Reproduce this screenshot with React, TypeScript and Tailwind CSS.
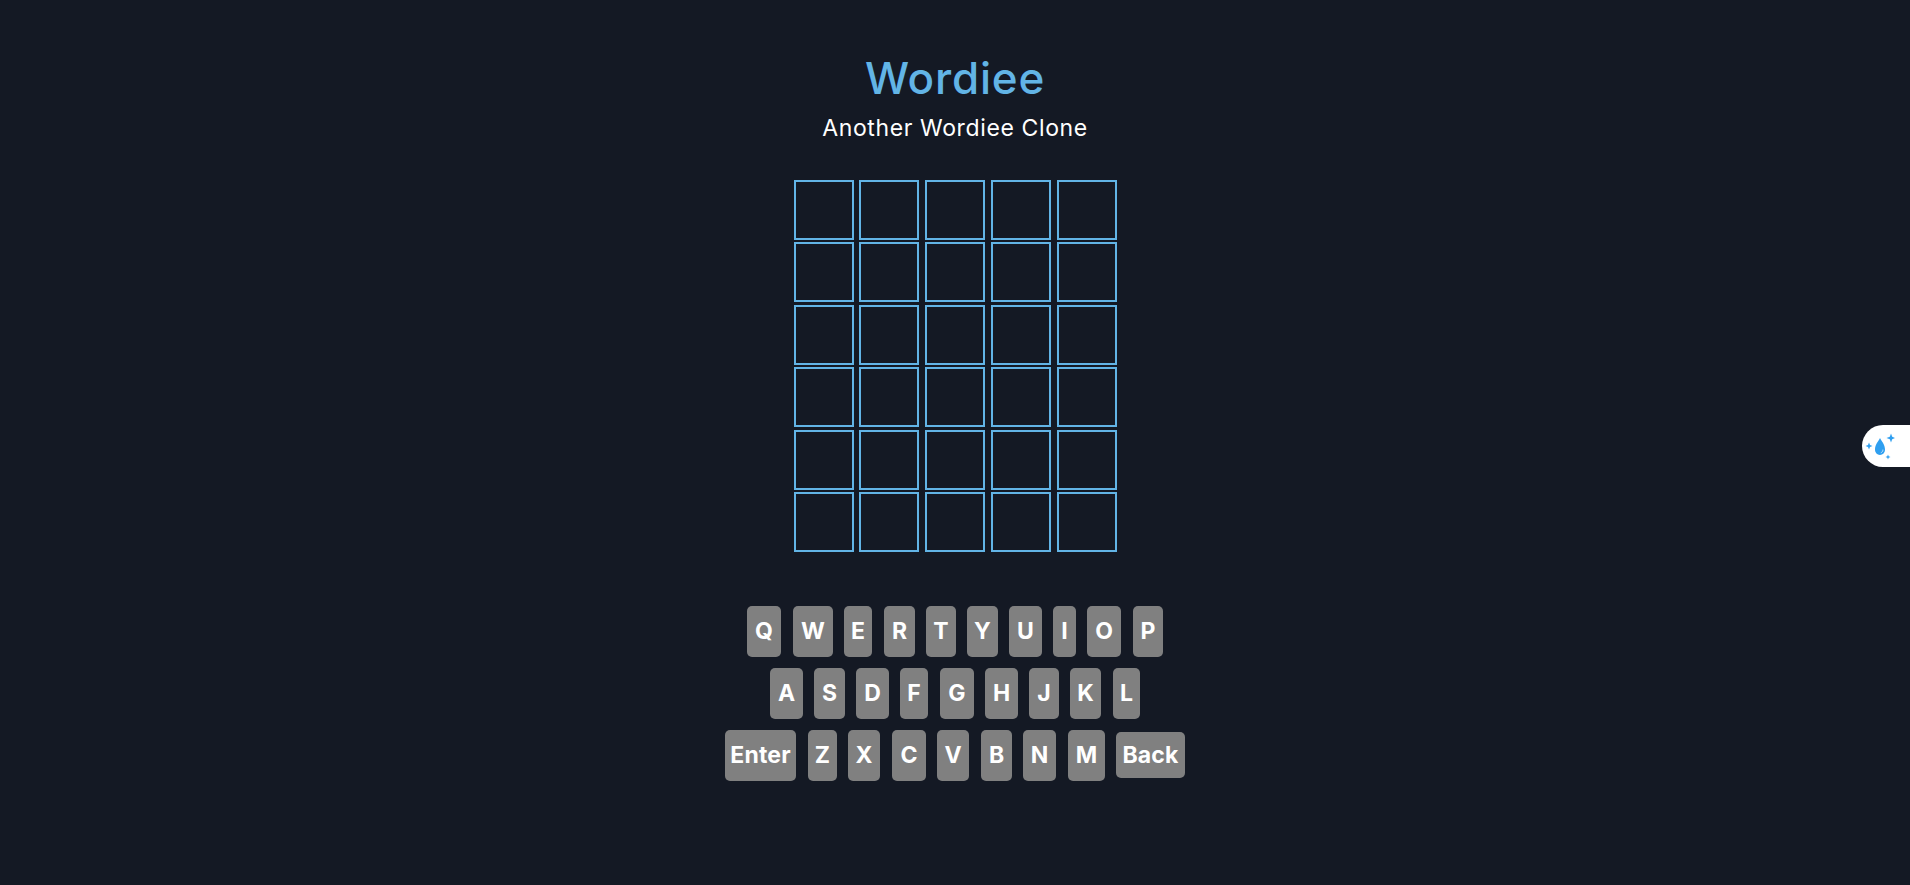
const FONT = "font-['Inter','Noto_Sans',sans-serif]";

const rows: [string, number, string][][] = [
  [["Q", 34, ""], ["W", 40, "ml-[12px]"], ["E", 28, "ml-[11px]"], ["R", 31, "ml-[12px]"], ["T", 30, "ml-[11px]"], ["Y", 31, "ml-[11px]"], ["U", 33, "ml-[11px]"], ["I", 23, "ml-[11px]"], ["O", 34, "ml-[11px]"], ["P", 30, "ml-[12px]"]],
  [["A", 33, ""], ["S", 31, "ml-[11px]"], ["D", 33, "ml-[11px]"], ["F", 28, "ml-[11px]"], ["G", 34, "ml-[12px]"], ["H", 33, "ml-[11px]"], ["J", 30, "ml-[11px]"], ["K", 31, "ml-[11px]"], ["L", 27, "ml-[12px]"]],
  [["Enter", 71, ""], ["Z", 29, "ml-[12px]"], ["X", 32, "ml-[11px]"], ["C", 34, "ml-[12px]"], ["V", 32, "ml-[11px]"], ["B", 31, "ml-[12px]"], ["N", 33, "ml-[11px]"], ["M", 37, "ml-[12px]"], ["Back", 69, "ml-[11px]"]],
];

function Key({ label, width, ml }: { label: string; width: number; ml: string }) {
  const isBack = label === "Back";
  return (
    <button
      style={{ width }}
      className={`${isBack ? "h-[46px]" : "h-[51px]"} ${ml} flex shrink-0 items-center justify-center rounded-[5px] bg-[#808080] text-[23px] leading-none font-bold text-white`}
    >
      <span className={label.length > 1 ? "tracking-[0.2px] whitespace-nowrap" : ""}>{label}</span>
    </button>
  );
}

function Widget() {
  return (
    <div className="fixed top-[425px] right-0 flex h-[42px] w-[48px] items-center rounded-l-[21px] bg-white pl-[3px]">
      <svg width="30" height="30" viewBox="0 0 30 30" fill="#2f9ff0">
        <path d="M15 7 C13.5 10.5 10 13 10 18.6 C10 21.8 12.2 24 15 24 C17.8 24 20 21.8 20 18.6 C20 13 16.5 10.5 15 7 Z" />
        <path d="M16.2 21.6 C17.3 21.2 17.9 20.2 17.9 19" fill="none" stroke="#bfe3fb" strokeWidth="1" strokeLinecap="round" />
        <path d="M26 2.5 L27.2 5.8 L30 7 L27.2 8.2 L26 11.5 L24.8 8.2 L21.5 7 L24.8 5.8 Z" />
        <path d="M4 11.5 L5 14 L7.5 15 L5 16 L4 18.5 L3 16 L0.5 15 L3 14 Z" />
        <path d="M23 23.5 L23.7 25.3 L25.5 26 L23.7 26.7 L23 28.5 L22.3 26.7 L20.5 26 L22.3 25.3 Z" />
      </svg>
    </div>
  );
}

export default function App() {
  return (
    <div className={`${FONT} flex min-h-[885px] flex-col items-center bg-[#141924] pt-[50px] pb-[104px]`}>
      <h1 className="h-[56px] text-[44px] leading-[56px] font-medium tracking-[0.8px] text-[#62b4e6]">Wordiee</h1>
      <p className="mt-[5px] h-[34px] text-[23px] leading-[34px] font-normal tracking-[0.62px] text-white">Another Wordiee Clone</p>
      <div className="mt-[35px] flex flex-col gap-y-[2.4px]">
        {Array.from({ length: 6 }).map((_, r) => (
          <div key={r} className="flex gap-x-[5.75px]">
            {Array.from({ length: 5 }).map((_, c) => (
              <div key={c} className="h-[60px] w-[60px] border-2 border-[#62b4e6]" />
            ))}
          </div>
        ))}
      </div>
      <div className="mt-[54px] flex flex-col gap-y-[11px]">
        {rows.map((row, i) => (
          <div key={i} className="flex items-center justify-center">
            {row.map(([label, width, ml]) => (
              <Key key={label} label={label} width={width} ml={ml} />
            ))}
          </div>
        ))}
      </div>
      <Widget />
    </div>
  );
}
